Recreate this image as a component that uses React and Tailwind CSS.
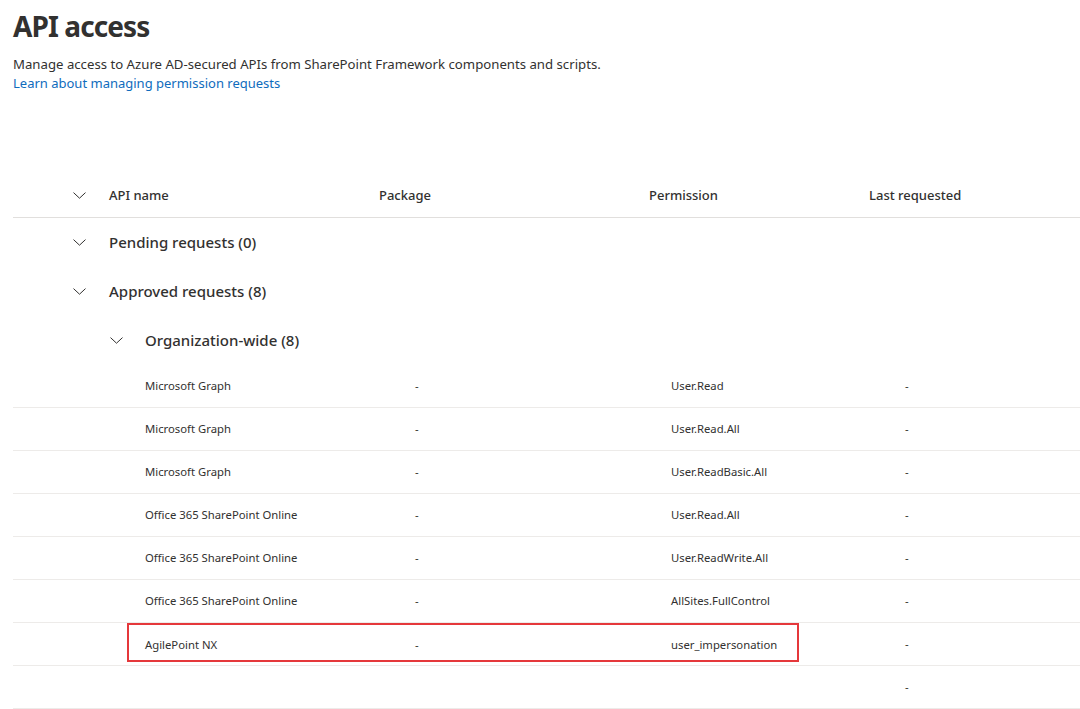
import React from 'react'

const rows = [
  { name: 'Microsoft Graph', pkg: '-', perm: 'User.Read', last: '-' },
  { name: 'Microsoft Graph', pkg: '-', perm: 'User.Read.All', last: '-' },
  { name: 'Microsoft Graph', pkg: '-', perm: 'User.ReadBasic.All', last: '-' },
  { name: 'Office 365 SharePoint Online', pkg: '-', perm: 'User.Read.All', last: '-' },
  { name: 'Office 365 SharePoint Online', pkg: '-', perm: 'User.ReadWrite.All', last: '-' },
  { name: 'Office 365 SharePoint Online', pkg: '-', perm: 'AllSites.FullControl', last: '-' },
  { name: 'AgilePoint NX', pkg: '-', perm: 'user_impersonation', last: '-', highlight: true },
  { name: '', pkg: '', perm: '', last: '-' },
]

function Chevron() {
  return (
    <svg width="13" height="7" viewBox="0 0 13 7" className="text-[#323130]">
      <polyline points="0.5,0.6 6.5,6.2 12.5,0.6" fill="none" stroke="currentColor" strokeWidth="1" />
    </svg>
  )
}

export default function App() {
  return (
    <div className="w-[1080px] h-[709px] overflow-hidden bg-white text-[#323130]" style={{ fontFamily: '"Noto Sans", "Open Sans", sans-serif' }}>
      <div className="px-[13px] pt-[6px]">
        <h1 className="text-[28px] font-bold leading-[40px] tracking-[-0.9px]">API access</h1>
        <p className="mt-[9px] text-[13.2px] leading-[19px]">Manage access to Azure AD-secured APIs from SharePoint Framework components and scripts.</p>
        <a className="block text-[13px] leading-[19px] text-[#0f6cbd]">Learn about managing permission requests</a>
      </div>

      <div className="mt-[81px] ml-[13px]">
        {/* header */}
        <div className="flex items-center h-[44px] border-b border-[#e1dfdd] text-[13px] font-medium">
          <div className="w-[96px] pl-[60px] flex"><Chevron /></div>
          <div className="w-[270px]">API name</div>
          <div className="w-[270px]">Package</div>
          <div className="w-[220px]">Permission</div>
          <div>Last requested</div>
        </div>

        {/* groups */}
        <div className="flex items-center h-[49px] text-[15px] font-medium">
          <div className="w-[96px] pl-[60px] flex"><Chevron /></div>
          <div>Pending requests (0)</div>
        </div>
        <div className="flex items-center h-[49px] text-[15px] font-medium">
          <div className="w-[96px] pl-[60px] flex"><Chevron /></div>
          <div>Approved requests (8)</div>
        </div>
        <div className="flex items-center h-[49px] text-[15px] font-medium">
          <div className="w-[132px] pl-[97px] flex"><Chevron /></div>
          <div>Organization-wide (8)</div>
        </div>

        {/* data rows */}
        {rows.map((r, i) => (
          <div key={i} className="h-[43px] border-b border-[#edebe9] flex text-[11.3px]">
            <div className="w-[114px] shrink-0" />
            <div className={r.highlight ? 'flex items-center self-start h-[39px] w-[672px] shrink-0 border-2 border-[#e5383b] pt-[5px]' : 'flex items-center w-[672px] shrink-0 border-2 border-transparent'}>
              <div className="w-[286px] pl-[16px]">{r.name}</div>
              <div className="w-[256px]">{r.pkg}</div>
              <div>{r.perm}</div>
            </div>
            <div className="w-[106px] shrink-0" />
            <div className="flex items-center">{r.last}</div>
          </div>
        ))}
      </div>
    </div>
  )
}
